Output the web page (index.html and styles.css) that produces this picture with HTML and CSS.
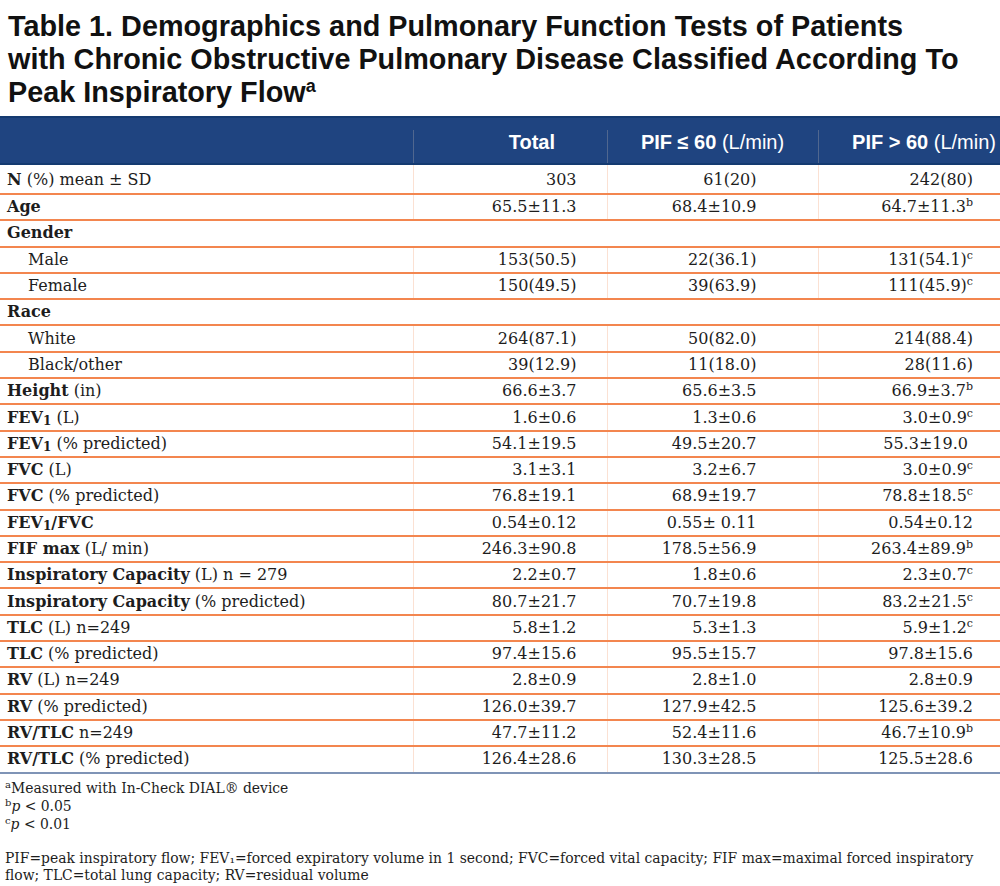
FILE: index.html
```html
<!DOCTYPE html>
<html lang="en">
<head>
<meta charset="utf-8">
<title>Table 1</title>
<link rel="stylesheet" href="styles.css">
</head>
<body>
<h1 class="title">Table 1. Demographics and Pulmonary Function Tests of Patients<br>with Chronic Obstructive Pulmonary Disease Classified According To<br>Peak Inspiratory Flow<sup>a</sup></h1>
<table class="data">
  <colgroup>
    <col class="c-label"><col class="c-total"><col class="c-low"><col class="c-high">
  </colgroup>
  <thead>
    <tr>
      <th class="h-label"></th>
      <th class="h-total"><b>Total</b></th>
      <th class="h-low"><b>PIF ≤ 60</b> (L/min)</th>
      <th class="h-high"><b>PIF &gt; 60</b> (L/min)</th>
    </tr>
  </thead>
  <tbody>
    <tr class="first"><td><b>N</b> (%) mean ± SD</td><td>303</td><td>61(20)</td><td>242(80)</td></tr>
    <tr><td><b>Age</b></td><td>65.5±11.3</td><td>68.4±10.9</td><td>64.7±11.3<sup>b</sup></td></tr>
    <tr class="group"><td colspan="4"><b>Gender</b></td></tr>
    <tr><td class="sub">Male</td><td>153(50.5)</td><td>22(36.1)</td><td>131(54.1)<sup>c</sup></td></tr>
    <tr><td class="sub">Female</td><td>150(49.5)</td><td>39(63.9)</td><td>111(45.9)<sup>c</sup></td></tr>
    <tr class="group"><td colspan="4"><b>Race</b></td></tr>
    <tr><td class="sub">White</td><td>264(87.1)</td><td>50(82.0)</td><td>214(88.4)</td></tr>
    <tr><td class="sub">Black/other</td><td>39(12.9)</td><td>11(18.0)</td><td>28(11.6)</td></tr>
    <tr><td><b>Height</b> (in)</td><td>66.6±3.7</td><td>65.6±3.5</td><td>66.9±3.7<sup>b</sup></td></tr>
    <tr><td><b>FEV<sub>1</sub></b> (L)</td><td>1.6±0.6</td><td>1.3±0.6</td><td>3.0±0.9<sup>c</sup></td></tr>
    <tr><td><b>FEV<sub>1</sub></b> (% predicted)</td><td>54.1±19.5</td><td>49.5±20.7</td><td>55.3±19.0&nbsp;</td></tr>
    <tr><td><b>FVC</b> (L)</td><td>3.1±3.1</td><td>3.2±6.7</td><td>3.0±0.9<sup>c</sup></td></tr>
    <tr><td><b>FVC</b> (% predicted)</td><td>76.8±19.1</td><td>68.9±19.7</td><td>78.8±18.5<sup>c</sup></td></tr>
    <tr><td><b>FEV<sub>1</sub>/FVC</b></td><td>0.54±0.12</td><td>0.55± 0.11</td><td>0.54±0.12</td></tr>
    <tr><td><b>FIF max</b> (L/ min)</td><td>246.3±90.8</td><td>178.5±56.9</td><td>263.4±89.9<sup>b</sup></td></tr>
    <tr><td><b>Inspiratory Capacity</b> (L) n = 279</td><td>2.2±0.7</td><td>1.8±0.6</td><td>2.3±0.7<sup>c</sup></td></tr>
    <tr><td><b>Inspiratory Capacity</b> (% predicted)</td><td>80.7±21.7</td><td>70.7±19.8</td><td>83.2±21.5<sup>c</sup></td></tr>
    <tr><td><b>TLC</b> (L) n=249</td><td>5.8±1.2</td><td>5.3±1.3</td><td>5.9±1.2<sup>c</sup></td></tr>
    <tr><td><b>TLC</b> (% predicted)</td><td>97.4±15.6</td><td>95.5±15.7</td><td>97.8±15.6</td></tr>
    <tr><td><b>RV</b> (L) n=249</td><td>2.8±0.9</td><td>2.8±1.0</td><td>2.8±0.9</td></tr>
    <tr><td><b>RV</b> (% predicted)</td><td>126.0±39.7</td><td>127.9±42.5</td><td>125.6±39.2</td></tr>
    <tr><td><b>RV/TLC</b> n=249</td><td>47.7±11.2</td><td>52.4±11.6</td><td>46.7±10.9<sup>b</sup></td></tr>
    <tr><td><b>RV/TLC</b> (% predicted)</td><td>126.4±28.6</td><td>130.3±28.5</td><td>125.5±28.6</td></tr>
  </tbody>
</table>
<div class="notes">
  <p class="fn"><sup>a</sup>Measured with In-Check DIAL® device</p>
  <p class="fn"><sup>b</sup><i>p</i> &lt; 0.05</p>
  <p class="fn"><sup>c</sup><i>p</i> &lt; 0.01</p>
  <p class="abbr">PIF=peak inspiratory flow; FEV₁=forced expiratory volume in 1 second; FVC=forced vital capacity; FIF max=maximal forced inspiratory flow; TLC=total lung capacity; RV=residual volume</p>
</div>
</body>
</html>
```

FILE: styles.css
```css
html, body {
  margin: 0;
  padding: 0;
  background: #ffffff;
}

body {
  width: 1000px;
  color: #1a1a1a;
  font-family: "DejaVu Serif", serif;
}

.title {
  margin: 0;
  padding: 10px 0 0 8px;
  font-family: "Liberation Sans", Arial, sans-serif;
  font-weight: bold;
  font-size: 28.8px;
  line-height: 33px;
  color: #111111;
  height: 116px;
  box-sizing: border-box;
}

.title sup {
  font-size: 18px;
  line-height: 0;
  vertical-align: 10px;
}

.data {
  width: 1000px;
  border-collapse: collapse;
  table-layout: fixed;
}

.c-label { width: 413px; }
.c-total { width: 194px; }
.c-low { width: 211px; }
.c-high { width: 182px; }

.data thead tr {
  background: #1f4480;
  border-top: 2px solid #143a70;
  border-bottom: 2px solid #143a70;
}

.data th {
  height: 41px;
  padding: 4px 0 0 0;
  font-family: "Liberation Sans", Arial, sans-serif;
  font-size: 20px;
  font-weight: normal;
  color: #ffffff;
  white-space: nowrap;
  background-image: linear-gradient(#50678f, #50678f);
  background-repeat: no-repeat;
  background-size: 1px 100%;
  background-position: 0 12px;
}

.data th.h-label { background-image: none; }
.data th.h-total { text-align: right; padding-right: 52px; }
.data th.h-low { text-align: center; }
.data th.h-high { text-align: right; padding-right: 4px; }

.data td {
  height: 24.3px;
  padding: 0;
  font-size: 16px;
  line-height: 24px;
  border-bottom: 2px solid #f3864f;
  border-left: 1px solid #fbe1d3;
  text-align: right;
  white-space: nowrap;
  color: #1d1d1d;
}

.data tr.first td {
  height: 26px;
  padding-top: 2px;
}

.data td:first-child {
  border-left: none;
  text-align: left;
  padding-left: 7px;
}

.data td:nth-child(2) { padding-right: 30px; }
.data td:nth-child(3) { padding-right: 61px; }
.data td:nth-child(4) { padding-right: 27px; }

.data td.sub { padding-left: 28px; }

.data tr.group td { border-left: none; }

.data tbody tr:last-child td {
  border-bottom: 2px solid #7f94b6;
}

.data sup {
  font-size: 11px;
  line-height: 0;
  vertical-align: 6px;
}

.data sub {
  font-size: 12px;
  line-height: 0;
  vertical-align: -2px;
}

.notes {
  padding: 5px 0 0 5px;
  font-size: 13.9px;
  color: #1d1d1d;
}

.notes p { margin: 0; }

.fn { line-height: 18px; }

.fn sup {
  font-size: 10px;
  line-height: 0;
  vertical-align: 5px;
}

.abbr {
  margin-top: 17px !important;
  line-height: 17px;
  width: 985px;
}
```
